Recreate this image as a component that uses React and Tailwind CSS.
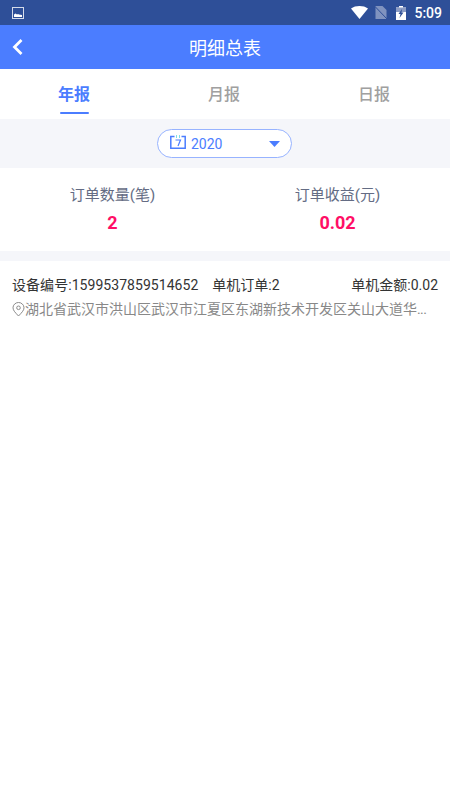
import React from "react";

const cjk = "font-['Roboto','Noto_Sans_CJK_SC',sans-serif]";

const StatusBar = () => (
    <div className="h-[25px] bg-[#2e4f98] flex items-center pl-3 pr-2">
        <svg width="12" height="12" viewBox="0 0 12 12">
            <rect x="0.500" y="0.500" width="11" height="11" fill="none" stroke="#d5dbe9" strokeWidth="1" />
            <path d="M2 10V7.500l1.500-1 1.500 1 1-.5 1 .5 3 .5V10z" fill="#fff" />
        </svg>
        <div className="ml-auto flex items-center">
            <svg width="17" height="13" viewBox="0 0 17 13">
                <path d="M0 2.500C2.400.800 5.200 0 8.500 0s6.100.800 8.500 2.500L8.500 13z" fill="#fff" />
            </svg>
            <svg className="ml-[7px]" width="12" height="13" viewBox="0 0 12 13">
                <path d="M0.500 0H7.500l4 4v9H.500z" fill="#8093bf" />
                <path d="M0 0.500L12 13" stroke="#2e4f98" strokeWidth="1" />
            </svg>
            <svg className="ml-[9px]" width="10" height="14" viewBox="0 0 10 14">
                <path d="M3 0h4v1.500h3V14H0V1.500h3z" fill="#fff" />
                <path d="M0 1.500h10V6H0z" fill="#8c9cc4" />
                <path d="M6 3L2.500 8H4.500L3.500 12 7.500 6.500H5.500z" fill="#2e4f98" />
            </svg>
            <span className={`ml-[8px] text-[14px] leading-none font-medium text-white ${cjk}`}>5:09</span>
        </div>
    </div>
);

const Header = () => (
    <div className="relative h-[44px] bg-[#4b7dff] flex items-center justify-center pt-[2px]">
        <svg className="absolute left-[11px] top-[13px]" width="13" height="18" viewBox="0 0 13 18">
            <path d="M10.500 2L3.500 9l7 7" fill="none" stroke="#fff" strokeWidth="2.800" />
        </svg>
        <span className={`text-[18px] text-white ${cjk}`}>明细总表</span>
    </div>
);

const Tabs = () => (
    <div className="h-[50px] bg-white grid grid-cols-3">
        {[
            { label: "年报", active: true },
            { label: "月报" },
            { label: "日报" },
        ].map((tab) => (
            <div key={tab.label} className="relative flex justify-center pt-[14px] pr-[2px]">
                <span className={`text-[16px] leading-[24px] ${cjk} ${tab.active ? "font-bold text-[#4b7dff]" : "font-medium text-[#a0a0a0]"}`}>
                    {tab.label}
                </span>
                {tab.active && <div className="absolute bottom-[5px] w-[29px] h-[2px] rounded-full bg-[#4b7dff]" />}
            </div>
        ))}
    </div>
);

const YearPicker = () => (
    <div className="h-[49px] bg-[#f5f6fa] flex items-center justify-center">
        <div className="w-[135px] h-[29px] mr-px rounded-full border border-[#97b3ff] bg-white flex items-center pl-3 pr-[11px]">
            <svg width="16" height="14" viewBox="0 0 16 14" className="mb-[3px]">
                <path d="M4.500 1.500H.800v11.700h14.400V1.500H11.500" fill="none" stroke="#4b7dff" strokeWidth="1.500" />
                <path d="M6.500 0v3M9.500 0v3" stroke="#7fdfe6" strokeWidth="1" />
                <path d="M5.500 5h5L8 11" fill="none" stroke="#4b7dff" strokeWidth="1.200" />
            </svg>
            <span className={`ml-[5px] pt-[2px] text-[14px] text-[#4b7dff] ${cjk}`}>2020</span>
            <svg className="ml-auto" width="11" height="6" viewBox="0 0 11 6">
                <path d="M0 0h11L5.500 6z" fill="#4b7dff" />
            </svg>
        </div>
    </div>
);

const Stats = () => (
    <div className="h-[83px] bg-white grid grid-cols-2 pt-[15px]">
        {[
            { label: "订单数量(笔)", value: "2" },
            { label: "订单收益(元)", value: "0.02" },
        ].map((stat) => (
            <div key={stat.label} className="flex flex-col items-center">
                <span className={`text-[15px] leading-[24px] text-[#646c84] ${cjk}`}>{stat.label}</span>
                <span className={`mt-[4px] text-[18px] leading-[24px] font-bold text-[#ff0f66] ${cjk}`}>{stat.value}</span>
            </div>
        ))}
    </div>
);

const DeviceRow = () => (
    <div className="bg-white px-3 pt-[14px]">
        <div className={`flex text-[14px] leading-[20px] text-[#333] ${cjk}`}>
            <span className="tracking-[0.05px]">设备编号:1599537859514652</span>
            <span className="ml-[14px]">单机订单:2</span>
            <span className="ml-auto">单机金额:0.02</span>
        </div>
        <div className="mt-[4px] flex items-center">
            <svg className="shrink-0" width="13" height="15" viewBox="0 0 13 15">
                <path d="M6.500 14C3.500 10.800 1 8.500 1 5.800a5.500 5.300 0 0 1 11 0C12 8.500 9.500 10.800 6.500 14z" fill="none" stroke="#8a8a8a" strokeWidth="1" />
                <circle cx="6.500" cy="5.800" r="1.800" fill="none" stroke="#8a8a8a" strokeWidth="1" />
            </svg>
            <span className={`text-[14px] leading-[20px] text-[#888] ${cjk}`}>
                湖北省武汉市洪山区武汉市江夏区东湖新技术开发区关山大道华<span className="tracking-[-0.6px]">...</span>
            </span>
        </div>
    </div>
);

const App = () => (
    <div className="w-[450px] h-[800px] bg-white overflow-hidden">
        <StatusBar />
        <Header />
        <Tabs />
        <YearPicker />
        <Stats />
        <div className="h-[10px] bg-[#f5f6fa]" />
        <DeviceRow />
    </div>
);

export default App;
